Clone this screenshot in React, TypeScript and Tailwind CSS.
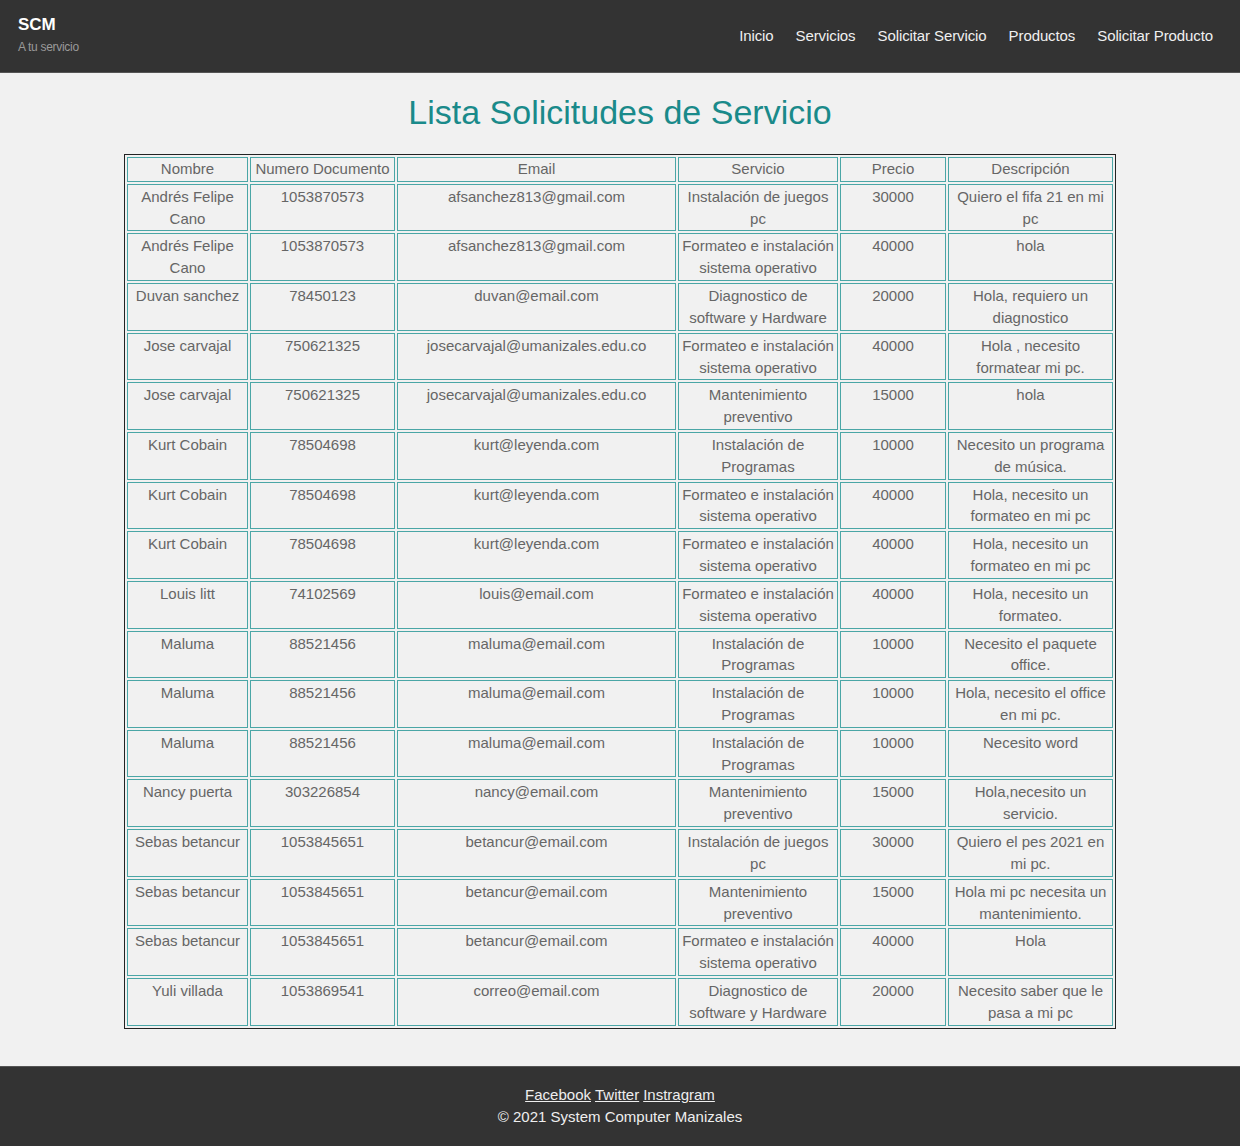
import React from 'react';

const rows: [string, string, string, string, string, string][] = [
  ['Andrés Felipe Cano', '1053870573', 'afsanchez813@gmail.com', 'Instalación de juegos pc', '30000', 'Quiero el fifa 21 en mi pc'],
  ['Andrés Felipe Cano', '1053870573', 'afsanchez813@gmail.com', 'Formateo e instalación sistema operativo', '40000', 'hola'],
  ['Duvan sanchez', '78450123', 'duvan@email.com', 'Diagnostico de software y Hardware', '20000', 'Hola, requiero un diagnostico'],
  ['Jose carvajal', '750621325', 'josecarvajal@umanizales.edu.co', 'Formateo e instalación sistema operativo', '40000', 'Hola , necesito formatear mi pc.'],
  ['Jose carvajal', '750621325', 'josecarvajal@umanizales.edu.co', 'Mantenimiento preventivo', '15000', 'hola'],
  ['Kurt Cobain', '78504698', 'kurt@leyenda.com', 'Instalación de Programas', '10000', 'Necesito un programa de música.'],
  ['Kurt Cobain', '78504698', 'kurt@leyenda.com', 'Formateo e instalación sistema operativo', '40000', 'Hola, necesito un formateo en mi pc'],
  ['Kurt Cobain', '78504698', 'kurt@leyenda.com', 'Formateo e instalación sistema operativo', '40000', 'Hola, necesito un formateo en mi pc'],
  ['Louis litt', '74102569', 'louis@email.com', 'Formateo e instalación sistema operativo', '40000', 'Hola, necesito un formateo.'],
  ['Maluma', '88521456', 'maluma@email.com', 'Instalación de Programas', '10000', 'Necesito el paquete office.'],
  ['Maluma', '88521456', 'maluma@email.com', 'Instalación de Programas', '10000', 'Hola, necesito el office en mi pc.'],
  ['Maluma', '88521456', 'maluma@email.com', 'Instalación de Programas', '10000', 'Necesito word'],
  ['Nancy puerta', '303226854', 'nancy@email.com', 'Mantenimiento preventivo', '15000', 'Hola,necesito un servicio.'],
  ['Sebas betancur', '1053845651', 'betancur@email.com', 'Instalación de juegos pc', '30000', 'Quiero el pes 2021 en mi pc.'],
  ['Sebas betancur', '1053845651', 'betancur@email.com', 'Mantenimiento preventivo', '15000', 'Hola mi pc necesita un mantenimiento.'],
  ['Sebas betancur', '1053845651', 'betancur@email.com', 'Formateo e instalación sistema operativo', '40000', 'Hola'],
  ['Yuli villada', '1053869541', 'correo@email.com', 'Diagnostico de software y Hardware', '20000', 'Necesito saber que le pasa a mi pc'],
];

const headers = ['Nombre', 'Numero Documento', 'Email', 'Servicio', 'Precio', 'Descripción'];
const widths = ['w-[121px]', 'w-[145px]', 'w-[279px]', 'w-[160px]', 'w-[106px]', 'w-[165px]'];
const nav = ['Inicio', 'Servicios', 'Solicitar Servicio', 'Productos', 'Solicitar Producto'];

export default function App() {
  return (
    <div className="min-h-[1146px] flex flex-col bg-[#f1f1f1] font-['Liberation_Sans',Arial,sans-serif]">
      <header className="h-[73px] bg-[#333333] flex items-start justify-between px-[18px] border-b border-[#555]">
        <div className="pt-[14px]">
          <div className="text-[17px] font-bold text-white leading-[22px]">SCM</div>
          <div className="text-[12px] text-[#9a9a9a] leading-[14px] mt-[4px] tracking-[-0.3px]">A tu servicio</div>
        </div>
        <nav className="flex gap-[22px] pt-[26px] pr-[9px]">
          {nav.map((n) => (
            <a key={n} className="text-[15px] text-[#f0f0f0] leading-[20px] tracking-[-0.1px]">{n}</a>
          ))}
        </nav>
      </header>

      <main className="flex-1 flex flex-col items-center pt-[19px] pb-[37px]">
        <h1 className="text-[34px] leading-[40px] text-[#1a8a8a] mb-[22px]">Lista Solicitudes de Servicio</h1>
        <table className="table-fixed border-separate border-spacing-[2px] border border-[#222] text-[15px] leading-[21.8px] text-[#666]">
          <thead>
            <tr>
              {headers.map((h, i) => (
                <th key={h} className={`${widths[i]} font-normal border border-[#4aa6a6] px-[1px] pt-[0px] pb-[1px]`}>{h}</th>
              ))}
            </tr>
          </thead>
          <tbody>
            {rows.map((r, ri) => (
              <tr key={ri}>
                {r.map((c, ci) => (
                  <td key={ci} className="align-top text-center border border-[#4aa6a6] px-[1px] py-[1px] h-[47.65px]">{c}</td>
                ))}
              </tr>
            ))}
          </tbody>
        </table>
      </main>

      <footer className="h-[80px] bg-[#333333] border-t border-[#555] flex flex-col items-center pt-[17px] text-[15px] leading-[22px] text-[#eeeeee]">
        <div className="flex gap-[4px]">
          <a className="underline">Facebook</a>
          <a className="underline">Twitter</a>
          <a className="underline">Instragram</a>
        </div>
        <div>© 2021 System Computer Manizales</div>
      </footer>
    </div>
  );
}
